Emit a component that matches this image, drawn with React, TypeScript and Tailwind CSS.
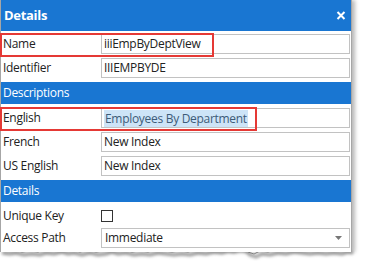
import React from 'react';

const font = { fontFamily: '"Open Sans", "Noto Sans", Arial, sans-serif' };

const tear =
  'M0,4 L8,5 L14,4 L22,6 L30,5 L38,6 L44,4 L52,5 L60,3 L66,5 L72,4 L80,6 L88,4 L96,6 L104,5 L110,3 L116,5 L124,4 L132,6 L140,5 L148,6 L156,4 L164,5 L172,6 L180,5 L188,6 L196,4 L204,5 L212,3 L220,4 L226,2 L232,3 L238,1 L244,2 L248,6 L254,8 L260,5 L268,6 L276,4 L284,5 L292,3 L300,4 L308,5 L316,4 L324,5 L332,4 L340,5 L346,3 L351,4';

function Row({
  label,
  children,
  mark,
}: {
  label: string;
  children?: React.ReactNode;
  mark?: number;
}) {
  return (
    <div className="relative flex h-[24px] items-center">
      <div className="w-[100px] pl-[2px] text-[12px] tracking-[-0.3px] text-[#222]">{label}</div>
      <div className="flex flex-1 items-center pr-px">{children}</div>
      {mark ? (
        <div
          className="pointer-events-none absolute left-[-1px] top-[1px] h-[24px] border-2 border-[#e53935]"
          style={{ width: mark }}
        />
      ) : null}
    </div>
  );
}

function Field({ value, selected }: { value: string; selected?: boolean }) {
  return (
    <div className="flex h-[20px] w-full items-center border border-[#c2c2c2] bg-white pl-[2px] text-[12px] tracking-[-0.3px] text-[#222]">
      {selected ? (
        <span className="bg-[#cde4f7] px-px leading-[17px] text-[#3c5b78]">{value}</span>
      ) : (
        <span>{value}</span>
      )}
    </div>
  );
}

function Section({ title }: { title: string }) {
  return (
    <div className="my-[2px] flex h-[22px] items-center bg-[#1976d2] pl-[2px] text-[12px] tracking-[-0.3px] text-white">
      {title}
    </div>
  );
}

export default function App() {
  return (
    <div className="h-[266px] w-[368px] overflow-hidden bg-white" style={font}>
      <div className="relative w-[352px] border-x border-[#a6a6a6] bg-white shadow-[3px_0_4px_rgba(0,0,0,0.28)]">
        <div className="flex h-[31px] items-center justify-between bg-[#1976d2] pl-[3px] pr-[5px] text-white">
          <span className="text-[13px] font-bold tracking-[-0.3px]">Details</span>
          <svg width="10" height="9" viewBox="0 0 10 9">
            <path d="M1.5 1 L8.5 8 M8.5 1 L1.5 8" stroke="#fff" strokeWidth="2" />
          </svg>
        </div>
        <div className="pt-px">
          <Row label="Name" mark={214}>
            <Field value="iiiEmpByDeptView" />
          </Row>
          <Row label="Identifier">
            <Field value="IIIEMPBYDE" />
          </Row>
        </div>
        <Section title="Descriptions" />
        <Row label="English" mark={257}>
          <Field value="Employees By Department" selected />
        </Row>
        <Row label="French">
          <Field value="New Index" />
        </Row>
        <Row label="US English">
          <Field value="New Index" />
        </Row>
        <Section title="Details" />
        <Row label="Unique Key">
          <div className="h-[12px] w-[12px] border border-[#333] bg-white" />
        </Row>
        <div className="-mt-[2px]">
          <Row label="Access Path">
            <div className="flex h-[20px] w-full items-center justify-between border border-[#c2c2c2] bg-white pl-[3px] pr-[7px] text-[12px] tracking-[-0.3px] text-[#222]">
              <span>Immediate</span>
              <svg width="7" height="4" viewBox="0 0 7 4">
                <path d="M0 0 L7 0 L3.5 4 Z" fill="#777" />
              </svg>
            </div>
          </Row>
        </div>
        <div className="h-[2px]" />
      </div>
      <svg width="368" height="20" viewBox="0 0 368 20" className="-mt-[6px] block">
        <defs>
          <filter id="blur" x="-5%" y="-50%" width="110%" height="200%">
            <feGaussianBlur stdDeviation="1.6" />
          </filter>
        </defs>
        <path d={tear} transform="translate(2,3)" stroke="#9a9a9a" strokeWidth="3" fill="none" filter="url(#blur)" />
        <path d={tear + ' L351,0 L0,0 Z'} fill="#fff" stroke="none" />
        <path d={tear} stroke="#8c8c8c" strokeWidth="1" fill="none" />
      </svg>
    </div>
  );
}
